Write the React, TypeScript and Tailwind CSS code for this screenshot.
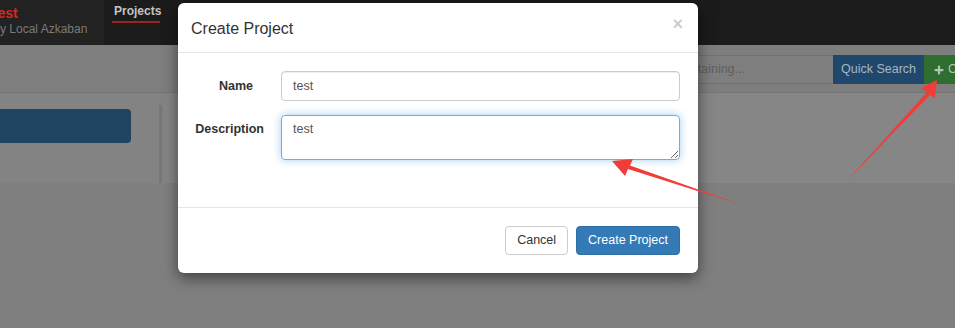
import React from 'react';
import { Plus } from 'lucide-react';

function Navbar() {
  return (
    <nav className="h-[45px] bg-[#1b1b1b] flex">
      <div className="w-[104px] bg-[#222222] overflow-hidden">
        <div className="ml-[-10px] pt-[5px] whitespace-nowrap">
          <div className="text-[14px] font-bold leading-[16px] text-[#d42a23]">Test</div>
          <div className="text-[12px] leading-[14px] mt-[1px] text-[#7a7a7a]">My Local Azkaban</div>
        </div>
      </div>
      <div className="pl-[10px] pt-[4px]">
        <div className="text-[12px] font-bold leading-[14px] text-[#c4c4c4]">Projects</div>
        <div className="h-[2px] mt-[3px] w-[48px] -ml-[2px] bg-[#9a2424]" />
      </div>
    </nav>
  );
}

function SearchBar() {
  return (
    <div className="h-[48px] bg-[#7e7e7e] border-b border-[#747474] flex justify-end pt-[10px]">
      <div className="h-[29px] w-[300px] border-y border-[#727272] flex items-center justify-end pr-[88px] text-[12.5px] text-[#5e5e5e]">
        Search for projects containing...
      </div>
      <div className="h-[29px] w-[91px] bg-[#1f486c] flex items-center justify-center text-[12.5px] text-[#a9b6c4]">
        Quick Search
      </div>
      <div className="h-[29px] w-[31px] bg-[#2f6e30] flex items-center pl-[9px] overflow-hidden whitespace-nowrap text-[12.5px] text-[#b4c4b4]">
        <Plus size={12} strokeWidth={4.5} className="shrink-0 text-[#b4c4b4]" />
        <span className="ml-[3px]">Create Project</span>
      </div>
    </div>
  );
}

function ContentRow() {
  return (
    <div className="h-[90px] flex bg-[#838383]">
      <div className="w-[131px] h-[34px] mt-[16px] bg-[#1f4462] rounded-r-[4px]" />
      <div className="w-[3px] h-[78px] mt-[12px] ml-[28px] bg-[#777777]" />
      <div className="flex-1 ml-[3px] bg-[#868686]" />
    </div>
  );
}

function CreateProjectModal() {
  return (
    <div className="absolute left-[178px] top-[3px] w-[520px] h-[270px] bg-white rounded-[6px] shadow-[0_5px_15px_rgba(0,0,0,0.5)] flex flex-col">
      <div className="h-[50px] border-b border-[#e5e5e5] flex items-center justify-between pl-[13px] pr-[15px]">
        <h4 className="text-[16px] text-[#333333] mt-[2px]">Create Project</h4>
        <span className="text-[18px] font-bold text-black opacity-20 -mt-[7px]">×</span>
      </div>
      <div className="h-[154px] pt-[18px] pr-[18px] grid grid-cols-[86px_1fr] gap-x-[17px] gap-y-[14px] content-start text-[12.5px]">
        <label className="text-right font-bold text-[#333333] pr-[11px] self-center">Name</label>
        <input
          readOnly
          defaultValue="test"
          className="h-[30px] border border-[#cccccc] rounded-[4px] px-[11px] text-[#555555] shadow-[inset_0_1px_1px_rgba(0,0,0,0.075)] outline-none"
        />
        <label className="text-right font-bold text-[#333333] pt-[5px]">Description</label>
        <textarea
          readOnly
          defaultValue="test"
          className="h-[45px] border border-[#66afe9] rounded-[4px] px-[11px] py-[4px] text-[#555555] shadow-[0_0_8px_rgba(102,175,233,0.6)] outline-none"
        />
      </div>
      <div className="flex-1 border-t border-[#e5e5e5] flex items-center justify-end gap-[8px] pr-[18px] text-[12.5px]">
        <button className="h-[29px] px-[11px] border border-[#cccccc] rounded-[4px] bg-white text-[#333333]">Cancel</button>
        <button className="h-[29px] px-[11px] border border-[#2e6da4] rounded-[4px] bg-[#337ab7] text-white">Create Project</button>
      </div>
    </div>
  );
}

function Arrows() {
  return (
    <svg className="absolute inset-0 pointer-events-none" width={955} height={328} viewBox="0 0 955 328">
      <polygon
        fill="#f03d3a"
        points="612,161 633,159 630,165.5 745,206 628,169 625,176"
      />
      <polygon
        fill="#f03d3a"
        points="937,80 935,98 930,95 846,182 927,92 921,88"
      />
    </svg>
  );
}

export default function App() {
  return (
    <div className="relative w-[955px] h-[328px] overflow-hidden bg-[#7f7f7f] font-['Liberation_Sans',Arial,sans-serif]">
      <Navbar />
      <SearchBar />
      <ContentRow />
      <CreateProjectModal />
      <Arrows />
    </div>
  );
}
